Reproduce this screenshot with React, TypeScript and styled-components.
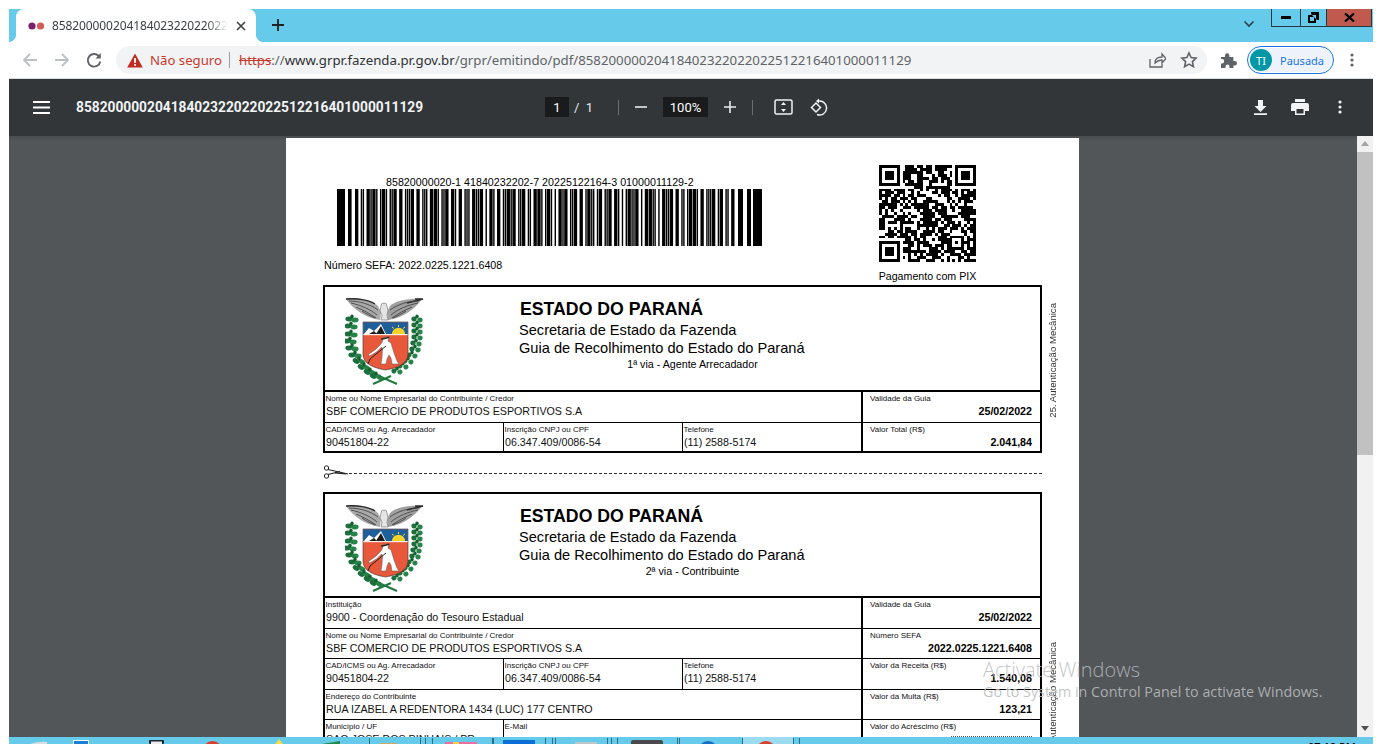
import React from "react";
import styled, { createGlobalStyle } from "styled-components";

const Global = createGlobalStyle`
  html, body { margin: 0; padding: 0; width: 1382px; height: 744px; overflow: hidden; background: #fff; }
  #root { height: 744px; }
  * { box-sizing: border-box; }
`;

const Screen = styled.div`
  position: relative; width: 1382px; height: 744px; padding: 9px 9px 0 9px; background: #fff; overflow: hidden;
  display: flex; flex-direction: column; font-family: "Roboto", "Liberation Sans", sans-serif;
`;
const TabStrip = styled.div`
  height: 33px; flex: none; background: #66cbea; display: flex; align-items: flex-end; position: relative; padding-left: 7px;
`;
const Tab = styled.div`
  position: relative; width: 240px; height: 33px; background: #fff; border-radius: 8px 8px 0 0; display: flex; align-items: center; padding-left: 12px; color: #3c4043; font-size: 12px;
  font-family: "Noto Sans", sans-serif;
  &::before, &::after { content: ""; position: absolute; bottom: 0; width: 7px; height: 7px; }
  &::before { left: -7px; background: radial-gradient(circle at 0 0, #66cbea 6.6px, #fff 7.2px); }
  &::after { right: -7px; background: radial-gradient(circle at 100% 0, #66cbea 6.6px, #fff 7.2px); }
`;
const Favicon = styled.svg` width: 17px; height: 8px; flex: none; margin-right: 7px; `;
const TabTitle = styled.div`
  width: 176px; white-space: nowrap; overflow: hidden; letter-spacing: -0.1px;
  -webkit-mask-image: linear-gradient(90deg, #000 88%, transparent);
`;
const TabClose = styled.svg` width: 10px; height: 10px; margin-left: 8px; flex: none; `;
const NewTab = styled.svg` width: 14px; height: 14px; margin: 0 0 10px 15px; flex: none; `;
const TabChevron = styled.svg` position: absolute; left: 1234px; top: 11px; width: 12px; height: 8px; `;
const WinControls = styled.div`
  position: absolute; top: 0; right: 1px; height: 18px; display: flex; border: 1px solid #24383f; border-top: none;
`;
const WinBtn = styled.div<{ $w: number; $bg?: string }>`
  width: ${p => p.$w}px; height: 17px; display: flex; align-items: center; justify-content: center; background: ${p => p.$bg || "transparent"};
  & + & { border-left: 1px solid #24383f; }
`;
const Toolbar = styled.div`
  height: 36px; flex: none; background: #fff; display: flex; align-items: center; padding-left: 12px;
`;
const NavIcon = styled.svg` width: 18px; height: 18px; flex: none; margin-right: 14px; `;
const Omnibox = styled.div`
  margin-left: -1px; width: 1091px; height: 28px; border-radius: 14px; background: #f1f3f4; display: flex; align-items: center; padding-left: 11px; font-size: 13.24px; font-family: "Noto Sans", sans-serif; white-space: nowrap; position: relative;
`;
const Warn = styled.svg` width: 16px; height: 15px; flex: none; margin-right: 7px; `;
const NotSecure = styled.span` color: #c5392c; font-size: 13.2px; `;
const Sep = styled.span` width: 1px; height: 16px; background: #9aa0a6; margin: 0 9px 0 7px; `;
const Strike = styled.span` color: #c5392c; text-decoration: line-through; `;
const UrlDark = styled.span` color: #303134; `;
const UrlGrey = styled.span` color: #5f6368; `;
const OmniIcons = styled.div` position: absolute; right: 9px; top: 5px; display: flex; gap: 14px; `;
const SmallIcon = styled.svg` width: 18px; height: 18px; `;
const Ext = styled.svg` width: 17px; height: 17px; margin-left: 13px; flex: none; `;
const Profile = styled.div`
  margin-left: 10px; width: 87px; height: 28px; border-radius: 14px; border: 1px solid #1a73e8; background: #eef3fb; display: flex; align-items: center; padding-left: 2px; color: #1a73e8; font-size: 11px; font-family: "Noto Sans", sans-serif; box-shadow: inset 0 0 0 1px #fff; flex: none;
`;
const Avatar = styled.div`
  width: 22px; height: 22px; border-radius: 50%; background: #0097a7; color: #fff; display: flex; align-items: center; justify-content: center; font-size: 11px; margin-right: 8px;
`;
const Dots = styled.svg` width: 4px; height: 14px; margin-left: 16px; flex: none; `;
const PdfBar = styled.div`
  border-top: 1px solid #dadce0; height: 58px; flex: none; background: #323639; color: #fff; display: flex; align-items: center; padding: 0 0 1px 24px;
`;
const Burger = styled.svg` width: 17px; height: 13px; flex: none; margin-right: 26px; `;
const PdfTitle = styled.div` font-weight: 700; font-size: 13.76px; width: 469px; white-space: nowrap; color: #f1f3f4; `;
const PageBox = styled.div`
  width: 24px; height: 20px; background: #191b1c; display: flex; align-items: center; justify-content: center; font-size: 13px; flex: none;
`;
const Slash = styled.div` font-size: 13px; margin-left: 5px; width: 44px; flex: none; white-space: pre; color: #e8eaed; `;
const Divider = styled.div<{ $ml?: number }>` width: 1px; height: 15px; background: #6b6f72; flex: none; margin-left: ${p => p.$ml || 0}px; `;
const ZoomIcon = styled.svg` width: 14px; height: 14px; margin-left: 15px; flex: none; `;
const ZoomBox = styled.div`
  margin-left: 15px; width: 45px; height: 20px; background: #191b1c; display: flex; align-items: center; justify-content: center; font-size: 13px; flex: none;
`;
const FitIcon = styled.svg` width: 19px; height: 16px; margin-left: 21px; flex: none; `;
const RotateIcon = styled.svg` width: 18px; height: 18px; margin-left: 17px; flex: none; `;
const PdfRight = styled.div` margin-left: auto; margin-right: 31px; display: flex; align-items: center; gap: 24px; `;
const PdfDots = styled.svg` width: 4px; height: 14px; margin-left: 5px; flex: none; `;
const ViewerWrap = styled.div` flex: 1; display: flex; min-height: 0; background: #525659; overflow: hidden; `;
const Viewer = styled.div` flex: 1; padding: 2px 0 0 277px; overflow: hidden; background: linear-gradient(#4a4d50, #525659 5px); `;
const Scrollbar = styled.div` width: 16px; flex: none; background: #f1f1f1; display: flex; flex-direction: column; align-items: center; `;
const ScrollUp = styled.div` width: 0; height: 0; border: 4px solid transparent; border-top: 0; border-bottom: 5px solid #a3a3a3; margin: 5px 0 6px; `;
const Thumb = styled.div` width: 16px; height: 303px; background: #c1c1c1; `;
const ScrollDown = styled.div` margin-top: auto; margin-bottom: 13px; width: 0; height: 0; border: 4px solid transparent; border-bottom: 0; border-top: 5px solid #505050; `;
const Page = styled.div`
  width: 793px; height: 640px; background: #fff; padding: 27px 0 0 37px; font-family: "Liberation Sans", Arial, sans-serif; color: #000;
`;
const TopRow = styled.div` display: flex; height: 120px; width: 719px; `;
const BarcodeCol = styled.div` width: 556px; flex: none; `;
const LineDigits = styled.div` font-size: 10.66px; margin: 11px 0 0 63px; line-height: 13px; white-space: nowrap; letter-spacing: 0.03px; `;
const BarSvg = styled.svg` display: block; margin: 0 0 0 14px; width: 425px; height: 57px; `;
const SefaLine = styled.div` font-size: 10.7px; margin: 13px 0 0 1px; line-height: 13px; `;
const QrCol = styled.div` width: 97px; display: flex; flex-direction: column; align-items: center; flex: none; `;
const QrSvg = styled.svg` width: 97px; height: 97px; display: block; flex: none; `;
const PixLabel = styled.div` font-size: 10.66px; line-height: 13px; margin-top: 8px; white-space: nowrap; `;
const FormRow = styled.div<{ $mt: number }>` display: flex; margin-top: ${p => p.$mt}px; `;
const FormBox = styled.div` width: 719px; border: 2px solid #000; flex: none; `;
const Head = styled.div<{ $h: number }>` height: ${p => p.$h}px; display: flex; border-bottom: 2px solid #000; `;
const Crest = styled.svg` width: 80px; height: 88px; margin: 11px 0 0 20px; flex: none; `;
const HeadText = styled.div` margin-left: 94px; padding-top: 12px; `;
const HeadTitle = styled.div` font-weight: 700; font-size: 17.7px; line-height: 20px; margin-left: 1px; white-space: nowrap; `;
const HeadSub = styled.div` font-size: 14.6px; line-height: 18px; white-space: nowrap; &:nth-child(2) { margin-top: 2px; } `;
const HeadVia = styled.div` font-size: 10.7px; line-height: 13px; text-align: center; margin-top: 1px; width: 347px; white-space: nowrap; `;
const Line = styled.div<{ $h: number }>` display: flex; height: ${p => p.$h}px; & + & { border-top: 1px solid #000; } `;
const LeftCells = styled.div` width: 538px; flex: none; display: flex; border-right: 2px solid #000; `;
const Cell = styled.div<{ $w?: number }>`
  ${p => p.$w ? `width: ${p.$w}px; flex: none;` : "flex: 1;"} padding: 2px 0 0 0.5px; min-width: 0; & + & { border-left: 1px solid #000; }
`;
const Label = styled.div` font-size: 8px; line-height: 9px; white-space: nowrap; color: #111; `;
const Value = styled.div` font-size: 10.7px; line-height: 13px; margin: 2px 0 0 0.5px; white-space: nowrap; color: #111; `;
const RightCell = styled.div` flex: 1; padding: 2px 8px 0 7px; min-width: 0; `;
const RightValue = styled.div` font-size: 10.7px; font-weight: 700; line-height: 13px; margin-top: 2px; text-align: right; white-space: nowrap; `;
const DottedValue = styled.div` border-bottom: 1px dotted #555; margin: 5px 0 0 81px; `;
const AuthWrap = styled.div` width: 22px; flex: none; display: flex; align-items: flex-start; justify-content: center; `;
const Auth = styled.div<{ $mt: number }>` writing-mode: vertical-rl; transform: rotate(180deg); font-size: 9.6px; line-height: 12px; white-space: nowrap; color: #333; margin-top: ${p => p.$mt}px; `;
const CutLine = styled.div` display: flex; align-items: center; width: 719px; height: 16px; margin-top: 11px; `;
const Scissors = styled.svg` width: 26px; height: 14px; flex: none; `;
const Dash = styled.div` flex: 1; border-top: 1px dashed #333; margin-top: 2px; `;
const Taskbar = styled.div` position: absolute; left: 9px; right: 9px; bottom: 0; height: 7px; background: #66cbea; overflow: hidden; `;
const TaskSvg = styled.svg` display: block; width: 1364px; height: 7px; `;
const Clock = styled.div` position: absolute; left: 1299px; top: 3px; width: 50px; font-family: "Open Sans", sans-serif; font-size: 11px; line-height: 14px; font-weight: 600; color: #000; white-space: nowrap; `;
const Activate = styled.div` position: absolute; left: 983px; top: 658px; color: rgba(186,188,190,.88); font-family: "Open Sans", sans-serif; pointer-events: none; `;
const ActTitle = styled.div` font-size: 20px; line-height: 24px; font-weight: 300; white-space: nowrap; `;
const ActSub = styled.div` font-size: 14.3px; line-height: 20px; white-space: nowrap; `;

function itf(digits: string) {
  const enc = ["00110","10001","01001","11000","00101","10100","01100","00011","10010","01010"];
  const seq: number[] = [];
  for (let i = 0; i < digits.length; i += 2) {
    const a = enc[+digits[i]], b = enc[+digits[i+1]];
    for (let j = 0; j < 5; j++) { seq.push(a[j]==="1"?3:1); seq.push(b[j]==="1"?3:1); }
  }
  const total = seq.reduce((s, v) => s + v, 0);
  const k = 380 / total;
  const rects: {x:number;w:number}[] = [{x:0,w:8},{x:11,w:3.6}];
  let x = 18;
  seq.forEach((w,i) => { if (i%2===0) rects.push({x, w: w*k + 0.45}); x += w*k; });
  rects.push({x:401,w:5},{x:410,w:4},{x:416,w:9});
  return rects;
}
const bar = itf("85820000020418402322022022512216401000011129");

function qrCells() {
  const n = 33; const out: {x:number;y:number}[] = [];
  let s = 20225;
  const rnd = () => { s = (s*1103515245+12345) & 0x7fffffff; return (s>>>8)%100; };
  const inF = (x:number,y:number,a:number,b:number) => x>=a&&x<a+8&&y>=b&&y<b+8;
  for (let y=0;y<n;y++) for (let x=0;x<n;x++) {
    if (inF(x,y,0,0)||inF(x,y,25,0)||inF(x,y,0,25)) continue;
    if (x>=24&&x<29&&y>=24&&y<29) continue;
    if (rnd()<60) out.push({x,y});
  }
  return out;
}
const qr = qrCells();

const Finder = ({x,y}:{x:number;y:number}) => (
  <g>
    <path d={`M${x} ${y}h7v7h-7zM${x+1} ${y+1}v5h5v-5z`} fill="#000" fillRule="evenodd"/>
    <rect x={x+2} y={y+2} width={3} height={3} fill="#000"/>
  </g>
);

const Branch = ({flip}:{flip?:boolean}) => {
  const nodes = flip
    ? [[72,21],[72,27],[72,33],[72,39],[71,45],[70,51],[67,57],[63,63],[58,68],[52,73]]
    : [[7,21],[6,28],[6,36],[5,43],[7,50],[10,57],[14,63],[19,69],[25,74],[31,78]];
  return (
    <g>
      {nodes.map(([x,y],i)=>(
        <g key={i}>
          <ellipse cx={x-3} cy={y} rx={flip?2.6:3.6} ry="2.4" fill="#1b6f3a" transform={`rotate(${i>5?(flip?-35:35):0} ${x-3} ${y})`}/>
          <ellipse cx={x+3} cy={y+1} rx={flip?2.6:3.6} ry="2.4" fill="#26844a" transform={`rotate(${i>5?(flip?-35:35):0} ${x+3} ${y+1})`}/>
          <ellipse cx={x} cy={y-2.6} rx="1.700" ry="2" fill="#14602f"/>
        </g>
      ))}
    </g>
  );
};

const CrestArt = () => (
  <Crest viewBox="0 0 80 88">
    <Branch/><Branch flip/>
    <path d="M34 78L52 86M46 78L28 86" stroke="#1f7a3f" strokeWidth="2"/>
    <path d="M1 1C12 0 27 2 33 8L36 14L35 22L30 21C18 18 7 10 1 1Z" fill="#a9a9a9"/>
    <path d="M77 1C66 0 51 2 45 8L42 14L43 22L48 21C60 18 71 10 77 1Z" fill="#a0a0a0"/>
    <path d="M1 1C12 0 24 2 30 6M70 1L78 1L62 5" stroke="#2c2c2c" strokeWidth="1.500" fill="none"/>
    <path d="M6 5C15 7 25 11 32 17M11 9C18 12 24 15 31 20M17 13C21 16 26 18 30 20M4 3C14 3 25 6 33 12M73 5C63 7 53 11 46 17M67 9C60 12 54 15 47 20M61 13C57 16 52 18 48 20M74 3C64 3 53 6 45 12" stroke="#3b3b3b" strokeWidth=".8" fill="none"/>
    <path d="M36 8a3 3 0 0 1 6 0l1 5-1 4 1 5h-7l1-5-2-4z" fill="#e4e4e4" stroke="#555" strokeWidth=".5"/>
    <path d="M18 24H63V56C63 66 52 70 40.500 72C29 70 18 66 18 56Z" fill="#e8583a" stroke="#333" strokeWidth=".6"/>
    <rect x="18.300" y="24.300" width="44.400" height="12" fill="#1f5f99"/>
    <path d="M19 36L24 30L29 33L36 26L41 36Z" fill="#fff"/>
    <path d="M24 36L29 33L32 36ZM31 36L36 28L40 36Z" fill="#1d1d1d"/>
    <path d="M47 36.200a6.500 6.500 0 0 1 13 0Z" fill="#f6d32b"/>
    <path d="M53.500 27v2M47 29l2 1.500M60 29l-2 1.500" stroke="#f6d32b" strokeWidth="1"/>
    <rect x="18.300" y="36" width="44.400" height="1.200" fill="#f5f0e5"/>
    <path d="M38 40l5-1.200 1.500 1.700h-1l-.5 2.500 3 2 3 10 3 8 2 3h-7l-1-6-2-3-2 4-1 5h-5l1-7 .5-8-1-2-5 5-7 4-1-1.500 7-5 5-5 2-3z" fill="#fff" stroke="#555" strokeWidth=".5"/>
    <path d="M41 48L25 61l-2 5" fill="none" stroke="#222" strokeWidth="1"/>
    <path d="M36 40.500l8-2 .5 1.500-8 2z" fill="#2a2a2a"/>
  </Crest>
);

type C = { label: string; value: string; w?: number };
const FormLine = ({h,cells,rl,rv,dotted}:{h:number;cells:C[];rl:string;rv?:string;dotted?:boolean}) => (
  <Line $h={h}>
    <LeftCells>
      {cells.map(c => <Cell key={c.label} $w={c.w}><Label>{c.label}</Label><Value>{c.value}</Value></Cell>)}
    </LeftCells>
    <RightCell>
      <Label>{rl}</Label>
      {rv && <RightValue>{rv}</RightValue>}
      {dotted && <DottedValue/>}
    </RightCell>
  </Line>
);
const Header = ({via,h}:{via:string;h:number}) => (
  <Head $h={h}>
    <CrestArt/>
    <HeadText>
      <HeadTitle>ESTADO DO PARANÁ</HeadTitle>
      <HeadSub>Secretaria de Estado da Fazenda</HeadSub>
      <HeadSub>Guia de Recolhimento do Estado do Paraná</HeadSub>
      <HeadVia>{via}</HeadVia>
    </HeadText>
  </Head>
);
const Cad = "CAD/ICMS ou Ag. Arrecadador", Ins = "Inscrição CNPJ ou CPF", Nome = "Nome ou Nome Empresarial do Contribuinte / Credor", Sbf = "SBF COMERCIO DE PRODUTOS ESPORTIVOS S.A";
const idCells: C[] = [{label:Cad,value:"90451804-22",w:178},{label:Ins,value:"06.347.409/0086-54",w:179},{label:"Telefone",value:"(11) 2588-5174"}];
const seps = [369,420,425,432,492,493,545,552,555,607,611,617,677,679,742,793,799];

export default function App() {
  return (
    <Screen>
      <Global/>
      <TabStrip>
        <Tab>
          <Favicon viewBox="0 0 17 8"><circle cx="4" cy="4" r="3.6" fill="#7a1f6e"/><circle cx="12.5" cy="4" r="3.6" fill="#d35a5a"/></Favicon>
          <TabTitle>85820000020418402322022022512216401000011129</TabTitle>
          <TabClose viewBox="0 0 10 10"><path d="M1 1l8 8M9 1l-8 8" stroke="#3c4043" strokeWidth="1.6"/></TabClose>
        </Tab>
        <NewTab viewBox="0 0 14 14"><path d="M7 1v12M1 7h12" stroke="#202124" strokeWidth="1.8"/></NewTab>
        <TabChevron viewBox="0 0 12 8"><path d="M1.5 1.5L6 6l4.500-4.500" fill="none" stroke="#2d4048" strokeWidth="1.6"/></TabChevron>
        <WinControls>
          <WinBtn $w={28}><svg width="10" height="3" viewBox="0 0 10 3"><rect width="10" height="3" fill="#000"/></svg></WinBtn>
          <WinBtn $w={26}><svg width="11" height="11" viewBox="0 0 11 11"><path d="M3 2V0h8v8H9M0 3h8v8H0z M2 5v4h4V5z" fill="#000" fillRule="evenodd"/></svg></WinBtn>
          <WinBtn $w={45} $bg="#c05a4f"><svg width="11" height="9" viewBox="0 0 11 9"><path d="M1 .5l9 8M10 .5l-9 8" stroke="#000" strokeWidth="2.2"/></svg></WinBtn>
        </WinControls>
      </TabStrip>
      <Toolbar>
        <NavIcon viewBox="0 0 18 18"><path d="M16 9H3M9 3L3 9l6 6" fill="none" stroke="#bcc0c4" strokeWidth="1.8"/></NavIcon>
        <NavIcon viewBox="0 0 18 18"><path d="M2 9h13M9 3l6 6-6 6" fill="none" stroke="#bcc0c4" strokeWidth="1.8"/></NavIcon>
        <NavIcon viewBox="0 0 18 18"><path d="M14.5 6A6.3 6.3 0 1 0 15.3 10.5" fill="none" stroke="#5f6368" strokeWidth="1.9"/><path d="M15.8 2v5.4h-5.4z" fill="#5f6368"/></NavIcon>
        <Omnibox>
          <Warn viewBox="0 0 16 15"><path d="M8 .5L15.800 14.500H.2z" fill="#c5291e"/><rect x="7.100" y="5" width="1.800" height="5" fill="#fff"/><rect x="7.100" y="11" width="1.800" height="1.800" fill="#fff"/></Warn>
          <NotSecure>Não seguro</NotSecure>
          <Sep/>
          <Strike>https</Strike><UrlGrey>://</UrlGrey><UrlDark>www.grpr.fazenda.pr.gov.br</UrlDark><UrlGrey>/grpr/emitindo/pdf/85820000020418402322022022512216401000011129</UrlGrey>
          <OmniIcons>
            <SmallIcon viewBox="0 0 18 18"><path d="M2 8v8h12v-3M7 12c0-4 3-6 7-6V3l4 4.500-4 4.500V9c-3 0-5 1-7 3z" fill="none" stroke="#5f6368" strokeWidth="1.300"/></SmallIcon>
            <SmallIcon viewBox="0 0 18 18"><path d="M9 2l2.100 4.600 5 .6-3.700 3.400 1 5L9 13.100l-4.400 2.500 1-5L1.900 7.200l5-.6z" fill="none" stroke="#5f6368" strokeWidth="1.600"/></SmallIcon>
          </OmniIcons>
        </Omnibox>
        <Ext viewBox="0 0 17 17"><path d="M1 5h4V3.500a2.200 2.200 0 0 1 4.400 0V5h4v4h1.400a2.200 2.200 0 0 1 0 4.400H13.400V16H9.500v-1.500a2 2 0 0 0-4 0V16H1v-4.500h1a2.200 2.200 0 0 0 0-4.400H1z" fill="#5f6368"/></Ext>
        <Profile><Avatar>TI</Avatar>Pausada</Profile>
        <Dots viewBox="0 0 4 14"><circle cx="2" cy="2" r="1.600" fill="#5f6368"/><circle cx="2" cy="7" r="1.600" fill="#5f6368"/><circle cx="2" cy="12" r="1.600" fill="#5f6368"/></Dots>
      </Toolbar>
      <PdfBar>
        <Burger viewBox="0 0 17 13"><path d="M0 1h17M0 6.500h17M0 12h17" stroke="#fff" strokeWidth="2"/></Burger>
        <PdfTitle>85820000020418402322022022512216401000011129</PdfTitle>
        <PageBox>1</PageBox>
        <Slash>/  1</Slash>
        <Divider/>
        <ZoomIcon viewBox="0 0 14 14"><path d="M1 7h12" stroke="#e8eaed" strokeWidth="1.600"/></ZoomIcon>
        <ZoomBox>100%</ZoomBox>
        <ZoomIcon viewBox="0 0 14 14"><path d="M1 7h12M7 1v12" stroke="#e8eaed" strokeWidth="1.600"/></ZoomIcon>
        <Divider $ml={15}/>
        <FitIcon viewBox="0 0 19 16"><rect x="1" y="1" width="17" height="14" rx="1.500" fill="none" stroke="#f1f3f4" strokeWidth="1.500"/><path d="M9.500 3l2.500 3h-5zM9.500 13l2.500-3h-5z" fill="#f1f3f4"/></FitIcon>
        <RotateIcon viewBox="0 0 18 18"><path d="M1.500 9.500L6 5l4.500 4.500L6 14z" fill="none" stroke="#f1f3f4" strokeWidth="1.500"/><path d="M7 16.500A7 7 0 1 0 9 3H7" fill="none" stroke="#f1f3f4" strokeWidth="1.500"/><path d="M9 .5L6 3l3 2.500z" fill="#f1f3f4"/></RotateIcon>
        <PdfRight>
          <svg width="13" height="15" viewBox="0 0 13 15"><path d="M4 0h5v6h3.500L6.500 12 .5 6H4zM0 13.300h13V15H0z" fill="#f1f3f4"/></svg>
          <svg width="18" height="16" viewBox="0 0 18 16"><path d="M4 0h10v3H4zM2 4h14a2 2 0 0 1 2 2v6h-4v4H4v-4H0V6a2 2 0 0 1 2-2zM5.500 10v4.500h7V10z" fill="#f1f3f4" fillRule="evenodd"/></svg>
          <PdfDots viewBox="0 0 4 14"><circle cx="2" cy="2" r="1.600" fill="#f1f3f4"/><circle cx="2" cy="7" r="1.600" fill="#f1f3f4"/><circle cx="2" cy="12" r="1.600" fill="#f1f3f4"/></PdfDots>
        </PdfRight>
      </PdfBar>
      <ViewerWrap>
        <Viewer>
          <Page>
            <TopRow>
              <BarcodeCol>
                <LineDigits>85820000020-1 41840232202-7 20225122164-3 01000011129-2</LineDigits>
                <BarSvg viewBox="0 0 425 57" preserveAspectRatio="none">
                  {bar.map(r => <rect key={r.x} x={r.x} y={0} width={r.w} height={57} fill="#000"/>)}
                </BarSvg>
                <SefaLine>Número SEFA: 2022.0225.1221.6408</SefaLine>
              </BarcodeCol>
              <QrCol>
                <QrSvg viewBox="0 0 33 33" shapeRendering="crispEdges">
                  <Finder x={0} y={0}/><Finder x={26} y={0}/><Finder x={0} y={26}/>
                  <path d="M24 24h5v5h-5zM25 25v3h3v-3z" fill="#000" fillRule="evenodd"/><rect x="26" y="26" width="1" height="1"/>
                  {qr.map(c => <rect key={`${c.x}-${c.y}`} x={c.x} y={c.y} width={1} height={1} fill="#000"/>)}
                </QrSvg>
                <PixLabel>Pagamento com PIX</PixLabel>
              </QrCol>
            </TopRow>
            <FormRow $mt={0}>
              <FormBox>
                <Header h={105} via="1ª via - Agente Arrecadador"/>
                <FormLine h={30} cells={[{label:Nome,value:Sbf}]} rl="Validade da Guia" rv="25/02/2022"/>
                <FormLine h={29} cells={idCells} rl="Valor Total (R$)" rv="2.041,84"/>
              </FormBox>
              <AuthWrap><Auth $mt={18}>25. Autenticação Mecânica</Auth></AuthWrap>
            </FormRow>
            <CutLine>
              <Scissors viewBox="0 0 26 14"><circle cx="3.500" cy="3" r="2.200" fill="none" stroke="#222"/><circle cx="3.500" cy="11" r="2.200" fill="none" stroke="#222"/><path d="M5 4.500L25 9M5 9.500L17 6.500" stroke="#222" strokeWidth="1.200"/><path d="M12 7l11 1.500v1L12 8.500z" fill="#222"/></Scissors>
              <Dash/>
            </CutLine>
            <FormRow $mt={12}>
              <FormBox>
                <Header h={104} via="2ª via - Contribuinte"/>
                <FormLine h={30} cells={[{label:"Instituição",value:"9900 - Coordenação do Tesouro Estadual"}]} rl="Validade da Guia" rv="25/02/2022"/>
                <FormLine h={30} cells={[{label:Nome,value:Sbf}]} rl="Número SEFA" rv="2022.0225.1221.6408"/>
                <FormLine h={31} cells={idCells} rl="Valor da Receita (R$)" rv="1.540,08"/>
                <FormLine h={30} cells={[{label:"Endereço do Contribuinte",value:"RUA IZABEL A REDENTORA 1434 (LUC) 177 CENTRO"}]} rl="Valor da Multa (R$)" rv="123,21"/>
                <FormLine h={31} cells={[{label:"Município / UF",value:"SAO JOSE DOS PINHAIS / PR",w:178},{label:"E-Mail",value:""}]} rl="Valor do Acréscimo (R$)" dotted/>
              </FormBox>
              <AuthWrap><Auth $mt={150}>25. Autenticação Mecânica</Auth></AuthWrap>
            </FormRow>
          </Page>
        </Viewer>
        <Scrollbar><ScrollUp/><Thumb/><ScrollDown/></Scrollbar>
      </ViewerWrap>
      <Taskbar>
        <TaskSvg viewBox="9 737 1364 7">
          <rect x="742" y="737" width="51" height="7" fill="#9bdcf0"/>
          {seps.map(x => <rect key={x} x={x} y="738" width="1" height="6" fill="#2f6f86"/>)}
          <path d="M30 744q9-3 17-2v2z" fill="#d8dde0"/>
          <rect x="73" y="740" width="16" height="4" fill="#fff"/><rect x="74" y="741" width="14" height="3" fill="#1b7fd4"/>
          <rect x="149" y="740" width="15" height="4" rx="1" fill="#1c2530"/><rect x="151" y="741.500" width="11" height="3" fill="#e8ecef"/>
          <circle cx="212.500" cy="751" r="10" fill="#d9412f"/>
          <path d="M275 744l4-5 4 5z" fill="#f4dc4a"/>
          <path d="M322 744l18-3v3z" fill="#1f8a4e"/>
          <rect x="380" y="743" width="17" height="1" fill="#d0a860"/>
          <rect x="445" y="742" width="32" height="2" fill="#ee6f9b"/><rect x="453" y="742" width="6" height="2" fill="#f1d24a"/>
          <rect x="503" y="740" width="32" height="4" fill="#0b6fd8"/>
          <rect x="575" y="742" width="22" height="2" fill="#bfc6c9"/>
          <rect x="631" y="740" width="32" height="8" rx="2" fill="#4a4a4a"/>
          <circle cx="708" cy="751" r="10" fill="#1a6fc4"/>
          <circle cx="766" cy="751" r="10" fill="#d9412f"/>
        </TaskSvg>
        <Clock>07:19 PM</Clock>
      </Taskbar>
      <Activate>
        <ActTitle>Activate Windows</ActTitle>
        <ActSub>Go to System in Control Panel to activate Windows.</ActSub>
      </Activate>
    </Screen>
  );
}
